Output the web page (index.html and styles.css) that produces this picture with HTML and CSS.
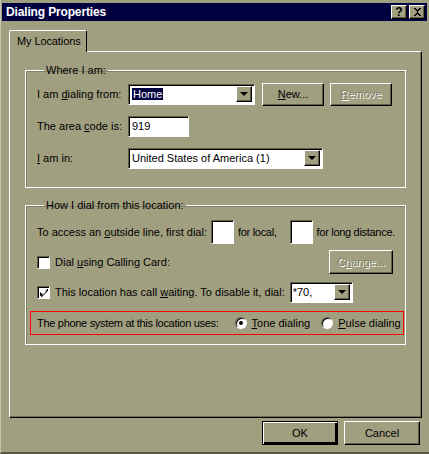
FILE: index.html
```html
<!DOCTYPE html>
<html lang="en">
<head>
    <meta charset="UTF-8">
    <title>Dialing Properties</title>
    <link rel="stylesheet" href="styles.css">
</head>
<body>
    <div class="dialog">
        <div class="titlebar">
            <span class="title">Dialing Properties</span>
            <div class="caption-buttons">
                <span class="cap-btn">?</span>
                <span class="cap-btn">
                    <svg width="9" height="8" viewBox="0 0 9 8"><path d="M1 0h2v1h1v1h1V1h1V0h2v1H7v1H6v1H5v2h1v1h1v1h1v1H6V7H5V6H4v1H3v1H1V7h1V6h1V5h1V3H3V2H2V1H1z" fill="#000"/></svg>
                </span>
            </div>
        </div>

        <div class="tabs">
            <div class="tab">My Locations</div>
        </div>

        <div class="panel">
            <fieldset class="group group-where">
                <legend>Where I am:</legend>
                <div class="row">
                    <label class="label">I am <u>d</u>ialing from:</label>
                    <div class="combo combo-from">
                        <span class="combo-text"><span class="selected">Home</span></span>
                        <span class="drop"><i class="arrow"></i></span>
                    </div>
                    <span class="btn btn-new"><u>N</u>ew...</span>
                    <span class="btn btn-remove disabled"><u>R</u>emove</span>
                </div>
                <div class="row">
                    <label class="label">The area <u>c</u>ode is:</label>
                    <div class="field field-area">919</div>
                </div>
                <div class="row">
                    <label class="label"><u>I</u> am in:</label>
                    <div class="combo combo-country">
                        <span class="combo-text">United States of America (1)</span>
                        <span class="drop"><i class="arrow"></i></span>
                    </div>
                </div>
            </fieldset>

            <fieldset class="group group-how">
                <legend>How I dial from this location:</legend>
                <div class="row">
                    <span>To access an <u>o</u>utside line, first dial:</span>
                    <div class="field field-small first"></div>
                    <span class="tight">for local,</span>
                    <div class="field field-small second"></div>
                    <span class="tight">for long distance.</span>
                </div>
                <div class="row">
                    <span class="check"></span>
                    <span>Dial <u>u</u>sing Calling Card:</span>
                    <span class="btn btn-change disabled">C<u>h</u>ange...</span>
                </div>
                <div class="row">
                    <span class="check checked">
                        <svg width="8" height="8" viewBox="0 0 7 7"><path d="M6 0h1v2H6v1H5v1H4v1H3v1H2v1H1V6H0V3h1v1h1v1h1V4h1V3h1V1h1z" fill="#000"/></svg>
                    </span>
                    <span>This location has call <u>w</u>aiting. To disable it, dial:</span>
                    <div class="combo combo-wait">
                        <span class="combo-text">*70,</span>
                        <span class="drop"><i class="arrow"></i></span>
                    </div>
                </div>
                <div class="row row-system">
                    <span class="tight">The phone system at this location uses:</span>
                    <span class="radio checked"></span>
                    <span><u>T</u>one dialing</span>
                    <span class="radio radio-pulse"></span>
                    <span><u>P</u>ulse dialing</span>
                </div>
            </fieldset>
        </div>

        <div class="actions">
            <span class="btn btn-ok default">OK</span>
            <span class="btn btn-cancel">Cancel</span>
        </div>
    </div>
</body>
</html>
```

FILE: styles.css
```css
body {
    margin: 0;
    background-color: #a09f80;
    font-family: 'Liberation Sans', Arial, sans-serif;
    font-size: 11px;
    line-height: 13px;
    color: #000;
}

.dialog {
    width: 429px;
    height: 454px;
    box-sizing: border-box;
    background-color: #a09f80;
    border-left: 1px solid #c8c8b4;
    border-bottom: 2px solid #5a5a44;
    padding: 3px 2px 0 1px;
}

u {
    text-decoration: underline;
    text-underline-offset: 1px;
}

.tight {
    letter-spacing: -0.3px;
}

/* title bar */
.titlebar {
    height: 18px;
    background-color: #020140;
    display: flex;
    align-items: center;
    justify-content: space-between;
    padding: 0 2px 0 4px;
}

.title {
    color: #fff;
    font-weight: bold;
    font-size: 12px;
    letter-spacing: -0.15px;
}

.caption-buttons {
    display: flex;
    gap: 2px;
}

.cap-btn {
    width: 16px;
    height: 14px;
    box-sizing: border-box;
    background-color: #a09f80;
    border-top: 1px solid #fff;
    border-left: 1px solid #fff;
    border-right: 1px solid #000;
    border-bottom: 1px solid #000;
    box-shadow: inset -1px -1px #5f5f48;
    display: flex;
    align-items: center;
    justify-content: center;
    font-weight: bold;
    font-size: 12px;
    line-height: 1;
}

/* tabs */
.tabs {
    display: flex;
    margin: 9px 0 -1px 7px;
    position: relative;
    z-index: 1;
}

.tab {
    height: 22px;
    box-sizing: border-box;
    padding: 0 5px 0 7px;
    display: flex;
    align-items: center;
    white-space: nowrap;
    letter-spacing: -0.1px;
    background-color: #a09f80;
    border-top: 1px solid #fff;
    border-left: 1px solid #fff;
    border-right: 1px solid #000;
    border-top-left-radius: 2px;
    border-top-right-radius: 2px;
}

.panel {
    margin-left: 7px;
    width: 413px;
    height: 367px;
    box-sizing: border-box;
    border-top: 1px solid #fff;
    border-left: 1px solid #fff;
    border-right: 1px solid #000;
    border-bottom: 1px solid #000;
    box-shadow: inset -1px -1px #6f6f58;
    padding: 12px 14px 0 15px;
}

/* group boxes */
.group {
    margin: 0;
    padding: 0 0 0 11px;
    border: 1px solid #fff;
    box-shadow: inset 1px 1px #7f7f66;
    width: 381px;
    min-width: 0;
    box-sizing: border-box;
}

.group legend {
    padding: 0 2px;
    margin-left: 7px;
}

.group-where {
    height: 124px;
    padding-top: 1px;
}

.group-how {
    margin-top: 11px;
    height: 146px;
    padding-top: 5px;
}

.row {
    display: flex;
    align-items: center;
    height: 32px;
    white-space: nowrap;
}

.row > * {
    flex-shrink: 0;
}

.group-how .row {
    height: 30px;
}

.label {
    width: 91px;
}

/* inputs */
.field,
.combo {
    height: 21px;
    box-sizing: border-box;
    background-color: #fff;
    border-top: 1px solid #5f5f48;
    border-left: 1px solid #5f5f48;
    border-right: 1px solid #fff;
    border-bottom: 1px solid #fff;
    box-shadow: inset 1px 1px #000;
    padding: 2px 3px;
    display: flex;
    align-items: center;
}

.field-area {
    width: 61px;
}

.field-small {
    width: 23px;
    height: 24px;
}

.field-small.first {
    margin: 0 4px 0 4px;
}

.field-small.second {
    margin: 0 4px 0 13px;
}

.combo {
    padding: 2px 2px 2px 3px;
    justify-content: space-between;
}

.combo-from {
    width: 127px;
}

.combo-country {
    width: 195px;
}

.combo-wait {
    width: 63px;
    margin-left: 5px;
    padding-left: 2px;
}

.combo-text {
    flex: 1;
    overflow: hidden;
}

.selected {
    background-color: #020140;
    color: #fff;
    padding: 0 1px;
}

.drop {
    width: 16px;
    height: 16px;
    box-sizing: border-box;
    background-color: #a09f80;
    border-top: 1px solid #fff;
    border-left: 1px solid #fff;
    border-right: 1px solid #000;
    border-bottom: 1px solid #000;
    box-shadow: inset -1px -1px #5f5f48;
    display: flex;
    align-items: center;
    justify-content: center;
}

.arrow {
    width: 0;
    height: 0;
    border-left: 4px solid transparent;
    border-right: 4px solid transparent;
    border-top: 4px solid #000;
}

/* buttons */
.btn {
    height: 23px;
    box-sizing: border-box;
    display: flex;
    align-items: center;
    justify-content: center;
    border-top: 1px solid #fff;
    border-left: 1px solid #fff;
    border-right: 1px solid #000;
    border-bottom: 1px solid #000;
    box-shadow: inset -1px -1px #5f5f48;
}

.btn.disabled {
    color: #7f7f66;
    text-shadow: 1px 1px #fff;
}

.btn-new {
    width: 62px;
    margin-left: 7px;
}

.btn-remove {
    width: 62px;
    margin-left: 6px;
}

.btn-change {
    width: 64px;
    height: 24px;
    margin-left: auto;
    margin-right: 12px;
}

/* check boxes and radios */
.check {
    width: 13px;
    height: 13px;
    box-sizing: border-box;
    background-color: #fff;
    border-top: 1px solid #5f5f48;
    border-left: 1px solid #5f5f48;
    border-right: 1px solid #fff;
    border-bottom: 1px solid #fff;
    box-shadow: inset 1px 1px #000;
    margin-right: 5px;
    display: flex;
    align-items: center;
    justify-content: center;
}

.check svg {
    margin: 1px 0 0 1px;
}

.group-how .row-system {
    margin: 4px 0 0 -7px;
    width: 374px;
    height: 24px;
    box-sizing: border-box;
    border: 1px solid #f00;
    padding-left: 6px;
}

.radio {
    width: 12px;
    height: 12px;
    box-sizing: border-box;
    border-radius: 50%;
    background-color: #fff;
    border: 1px solid;
    border-color: #5f5f48 #fff #fff #5f5f48;
    box-shadow: inset 1px 1px #000;
    margin: 0 5px 0 16px;
    display: flex;
    align-items: center;
    justify-content: center;
}

.radio.checked::after {
    content: "";
    width: 4px;
    height: 4px;
    border-radius: 50%;
    background-color: #000;
}

.radio-pulse {
    margin-left: 11px;
}

/* dialog buttons */
.actions {
    display: flex;
    justify-content: flex-end;
    gap: 6px;
    margin: 3px 7px 0 0;
}

.btn-ok,
.btn-cancel {
    width: 76px;
    height: 24px;
}

.btn.default {
    border: 1px solid #000;
    box-shadow: inset 1px 1px #fff, inset -2px -2px #000;
}
```
